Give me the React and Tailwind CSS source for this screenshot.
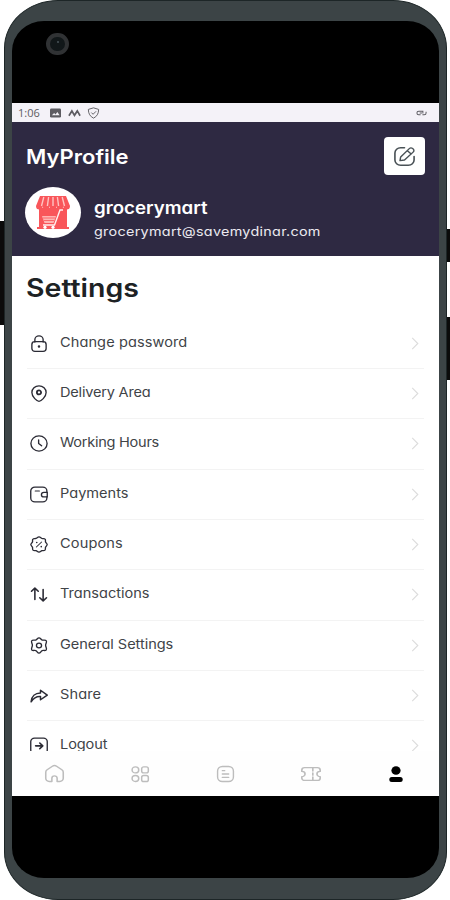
import React from "react";

function Icon({ children, className = "" }) {
  return (
    <svg
      viewBox="0 0 24 24"
      preserveAspectRatio="none"
      fill="none"
      stroke="currentColor"
      strokeWidth="1.8"
      strokeLinecap="round"
      strokeLinejoin="round"
      className={className}
    >
      {children}
    </svg>
  );
}

const settings = [
  {
    label: "Change password",
    spacing: "tracking-[0.08px]",
    icon: (
      <>
        <path d="M6.500 10V6.500a5.500 5.200 0 0 1 11 0V10" />
        <rect x="2.500" y="9.500" width="19" height="13.500" rx="4" />
        <circle cx="12" cy="16.200" r=".8" />
      </>
    ),
  },
  {
    label: "Delivery Area",
    spacing: "tracking-[-0.18px]",
    icon: (
      <>
        <path d="M12 23c-2.500 0-9.500-6-9.500-12.500a9.500 9.300 0 0 1 19 0C21.500 17 14.500 23 12 23Z" />
        <circle cx="12" cy="10.500" r="2.800" strokeWidth="2.400" />
      </>
    ),
  },
  {
    label: "Working Hours",
    spacing: "tracking-[-0.24px]",
    icon: (
      <>
        <circle cx="12" cy="12" r="10.800" />
        <path d="M11.500 7v5l4 3.200" />
      </>
    ),
  },
  {
    label: "Payments",
    spacing: "tracking-normal",
    icon: (
      <>
        <path d="M22.500 9V7a5.500 5.500 0 0 0-5.500-5.500H6.500A5.500 5.500 0 0 0 1 7v10a5.500 5.500 0 0 0 5.500 5.500H17a5.500 5.500 0 0 0 5.500-5.500v-1.500" />
        <path d="M23 9h-4.500a3.200 3.200 0 0 0 0 6.500H23Z" />
        <path d="M7 7h5.500" strokeWidth="1.500" />
      </>
    ),
  },
  {
    label: "Coupons",
    spacing: "tracking-[0.12px]",
    icon: (
      <>
        <path d="M12 1.200C13.800 1.200 14.600 3 16 3.500c1.500.5 3.300-.2 4.200.9.900 1 .1 2.700.5 4.100.4 1.300 2.200 2.200 2.200 3.600s-1.700 2.300-2.200 3.700c-.4 1.300.3 3.100-.7 4.100s-2.700.3-4.100.8c-1.300.5-2.200 2.100-3.900 2.100s-2.600-1.600-3.900-2.100c-1.400-.5-3.100.2-4.100-.8s-.3-2.800-.7-4.100c-.5-1.400-2.200-2.300-2.200-3.700s1.800-2.300 2.200-3.600c.4-1.400-.4-3.100.5-4.100.9-1.100 2.700-.4 4.200-.9 1.400-.5 2.200-2.300 4-2.300Z" />
        <path d="m8.500 15.500 7-7" strokeWidth="1.400" />
        <path d="M9 9.200h.01M15 15h.01" strokeWidth="2.200" />
      </>
    ),
  },
  {
    label: "Transactions",
    spacing: "tracking-normal",
    icon: (
      <>
        <path d="M6.500 19V3M2 7.500 6.500 3 11 7.500M17.500 5v16M13 16.500l4.500 4.500 4.500-4.500" strokeWidth="2.100" />
      </>
    ),
  },
  {
    label: "General Settings",
    spacing: "tracking-[-0.04px]",
    icon: (
      <>
        <path d="M12 1.200c2 0 2.600 2.500 4.300 3.100 1.700.5 4.300-.7 5.400 1 1.200 1.800-.9 3.800-.9 6.300s2 4.600.9 6.500c-1.100 1.700-3.700.5-5.400 1.100-1.700.7-2.300 3.600-4.300 3.600s-2.600-2.900-4.300-3.600c-1.700-.6-4.300.6-5.400-1.100-1.100-1.900.9-4 .9-6.500s-2.100-4.500-.9-6.300c1.100-1.700 3.700-.5 5.400-1C9.400 3.700 10 1.200 12 1.200Z" />
        <circle cx="12" cy="12" r="3.400" />
      </>
    ),
  },
  {
    label: "Share",
    spacing: "tracking-[0.1px]",
    icon: (
      <path d="M14 4.500 23 11.500 14 18v-4.500C8 13 4.500 16 1.500 21 2 13 7 8.500 14 8.500Z" strokeWidth="2" />
    ),
  },
  {
    label: "Logout",
    spacing: "tracking-[-0.08px]",
    icon: (
      <>
        <path d="M5 22.500a4 4 0 0 1-4-4V6.500a5 5 0 0 1 5-5h12a5 5 0 0 1 5 5v12a4 4 0 0 1-4 4" />
        <path d="M7.500 12.500h9M13 8.500l4 4-4 4" strokeWidth="2.200" />
      </>
    ),
  },
];

function StatusBar() {
  return (
    <div className="flex h-[19px] shrink-0 items-center bg-[#f4f2f8] pl-[6px] pr-3 text-[#5d5c62]">
      <span className="w-[24px] origin-left font-['Open_Sans',sans-serif] text-[11px] leading-none">1:06</span>
      <svg viewBox="0 0 12 10" className="ml-[8px] h-[10px] w-[11px]">
        <rect width="12" height="10" rx="1.500" fill="currentColor" />
        <path d="M2 7.500 4.500 5l1.500 1.500L8 4l2.500 3.500Z" fill="#f4f2f8" />
      </svg>
      <svg viewBox="0 0 14 8" fill="none" stroke="currentColor" strokeWidth="1.800" className="ml-[7px] h-[8px] w-[13px]">
        <path d="M1 7 4.200 1.800 7 6.500 10 1.800 13 7" />
      </svg>
      <svg viewBox="0 0 14 14" fill="none" stroke="currentColor" strokeWidth="1.100" className="ml-[6px] h-[12px] w-[13px]">
        <path d="M7 1 13 2.800c0 5-2 8.200-6 10.200C3 11 1 7.800 1 2.800Z" />
        <path d="m4.500 6.500 2 2 3.500-3.500" />
      </svg>
      <svg viewBox="0 0 12 6" fill="none" stroke="currentColor" strokeWidth="1.100" className="ml-auto h-[6px] w-[11px]">
        <path d="M5 5H3a2 2 0 0 1 0-4h4.500v2.500M4 3h2.500M7 5h2a2 2 0 0 0 2-2V1.500" />
      </svg>
    </div>
  );
}

function StoreLogo() {
  return (
    <svg viewBox="0 0 36 34" className="h-[34px] w-[36px]">
      <path d="M4 12h28v19H4Z" fill="#f9565a" />
      <path d="M2 31h32v2H2Z" fill="#f9565a" />
      <path d="M5 0h26l4 10H1Z" fill="#f9565a" />
      <path d="M1 10h6.800a3.400 3.600 0 0 1-6.800 0M7.800 10h6.800a3.400 3.600 0 0 1-6.800 0M14.600 10h6.800a3.400 3.600 0 0 1-6.800 0M21.400 10h6.800a3.400 3.600 0 0 1-6.800 0M28.200 10H35a3.400 3.600 0 0 1-6.800 0" fill="#f9565a" />
      <path d="M8.800 1 6.500 10M13.600 1l-1.200 9M18 1v9M22.400 1l1.200 9M27.200 1l2.300 9" stroke="#ffc4c2" strokeWidth="1.400" />
      <path d="M7 20h14l-2.500 7H9.500Z" fill="#ffb5b3" />
      <path d="M28 14h-3l-5.500 15H8" fill="none" stroke="#fff0ef" strokeWidth="1.400" />
      <path d="M8 22h12M9 24.500h10" stroke="#f9565a" strokeWidth=".8" />
      <circle cx="10" cy="31.300" r="1.600" fill="#fff" />
      <circle cx="18" cy="31.300" r="1.600" fill="#fff" />
    </svg>
  );
}

function ProfileHeader() {
  return (
    <header className="flex h-[134px] shrink-0 flex-col bg-[#2e2942] pl-[13px] pr-[14px] pt-[15px] text-white">
      <div className="flex h-[38px] items-center justify-between">
        <h1 className="origin-left translate-y-px scale-x-[1.1] pl-[1px] text-[20px] font-semibold leading-none">MyProfile</h1>
        <button className="flex h-[38px] w-[41px] items-center justify-center rounded-[4px] bg-white text-[#4a5257]">
          <Icon className="h-[21px] w-[23px]">
            <path d="M12 2H8a6 6 0 0 0-6 6v8a6 6 0 0 0 6 6h8a6 6 0 0 0 6-6v-4" strokeWidth="1.700" />
            <path d="m8 12.500 9-9.500c1-1 2.500-1 3.800.2s1.300 2.800.2 3.800l-9 9-4.700.8ZM15 5.500l4 3.700" strokeWidth="1.500" />
          </Icon>
        </button>
      </div>
      <div className="mt-[12px] flex">
        <div className="flex h-[51px] w-[56px] items-center justify-center rounded-[50%] bg-white">
          <StoreLogo />
        </div>
        <div className="flex flex-col pl-[13px] pt-[12px]">
          <span className="origin-left scale-x-[1.1] text-[17px] font-semibold leading-[18px]">grocerymart</span>
          <span className="mt-[7px] origin-left scale-x-[1.15] text-[12.500px] leading-[16px] tracking-[0.25px] text-[#ebe9f0]">grocerymart@savemydinar.com</span>
        </div>
      </div>
    </header>
  );
}

function SettingsList() {
  return (
    <main className="flex h-[495px] shrink-0 flex-col overflow-hidden pl-[14px] pr-[15px]">
      <h2 className="h-[62.500px] shrink-0 origin-left scale-x-[1.14] pt-[18.500px] text-[25px] font-semibold leading-[26px] text-[#1d2224]">Settings</h2>
      {settings.map(({ label, spacing, icon }) => (
        <div key={label} className="ml-px flex h-[50.350px] shrink-0 items-center border-b border-[#f3f3f3] pl-[3px] pr-[5px]">
          <Icon className="h-[17px] w-[18px] text-[#2b2b35]">{icon}</Icon>
          <span className={`ml-[12px] origin-left -translate-y-px scale-x-[1.12] text-[13px] leading-none text-[#404347] ${spacing}`}>{label}</span>
          <svg viewBox="0 0 8 14" fill="none" stroke="#dcdcdc" strokeWidth="1.200" className="ml-auto h-[13px] w-[8px]">
            <path d="m1 1 6 6-6 6" />
          </svg>
        </div>
      ))}
    </main>
  );
}

function BottomNav() {
  return (
    <nav className="flex h-[45px] shrink-0 items-center bg-[#fefefe] text-[#bdbdbd]">
      <div className="flex flex-1 justify-center">
        <Icon className="h-[19px] w-[21px]">
          <path d="M9 22H6a4 4 0 0 1-4-4v-7.500a4 4 0 0 1 1.600-3.200l6-4.500a4 4 0 0 1 4.800 0l6 4.500a4 4 0 0 1 1.600 3.200V18a4 4 0 0 1-4 4h-3v-4a3 3 0 0 0-6 0Z" />
        </Icon>
      </div>
      <div className="flex flex-1 justify-center">
        <Icon className="h-[18px] w-[20px]">
          <circle cx="6.500" cy="6.500" r="4" />
          <rect x="14" y="2.500" width="8" height="8" rx="2.500" />
          <circle cx="6.500" cy="18" r="4" />
          <rect x="14" y="14" width="8" height="8" rx="2.500" />
        </Icon>
      </div>
      <div className="flex flex-1 justify-center">
        <Icon className="h-[18px] w-[19px]">
          <rect x="2" y="2" width="20" height="20" rx="6" />
          <path d="M8 7.500h3M8 12h8M8 16.500h8" />
        </Icon>
      </div>
      <div className="flex flex-1 justify-center">
        <Icon className="h-[18px] w-[22px]">
          <path d="M5 3.500h14a3 3 0 0 1 3 3V8.500a3.500 3.500 0 0 0 0 7v2a3 3 0 0 1-3 3H5a3 3 0 0 1-3-3v-2a3.500 3.500 0 0 0 0-7v-2a3 3 0 0 1 3-3Z" />
          <path d="M14 4v4M14 10.500v3M14 16v4" />
        </Icon>
      </div>
      <div className="flex flex-1 justify-center text-black">
        <svg viewBox="0 0 14 16" fill="currentColor" className="h-[16px] w-[14px]">
          <ellipse cx="7" cy="4.500" rx="4.600" ry="4.300" />
          <rect x=".3" y="11" width="13.400" height="5" rx="2.500" />
        </svg>
      </div>
    </nav>
  );
}

export default function App() {
  return (
    <div className="relative flex h-[900px] w-[450px] overflow-hidden bg-white font-[Inter,sans-serif] [font-feature-settings:'cv11']">
      <div className="absolute left-0 top-[221px] h-[104px] w-[8px] bg-[#0b0b0b]" />
      <div className="absolute right-0 top-[229px] h-[33px] w-[8px] bg-[#0b0b0b]" />
      <div className="absolute right-0 top-[317px] h-[63px] w-[8px] bg-[#0b0b0b]" />
      <div className="relative ml-[4px] flex h-[900px] w-[443px] rounded-[54px/48px] border border-[#1d2627] bg-[#3c4446] pl-[7px] pr-[7px] pt-[20px]">
        <div className="flex h-[857px] w-[427px] flex-col overflow-hidden rounded-[32px/30px] bg-black">
          <div className="flex h-[82px] shrink-0 pl-[34px] pt-[12px]">
            <div className="flex h-[22px] w-[23px] items-center justify-center rounded-full border-[4px] border-[#303234] bg-[#111719]">
              <div className="mb-[5px] h-[2px] w-[2px] rounded-full bg-[#48545a]" />
            </div>
          </div>
          <div className="flex h-[693px] shrink-0 flex-col bg-white">
            <StatusBar />
            <ProfileHeader />
            <SettingsList />
            <BottomNav />
          </div>
        </div>
      </div>
    </div>
  );
}
